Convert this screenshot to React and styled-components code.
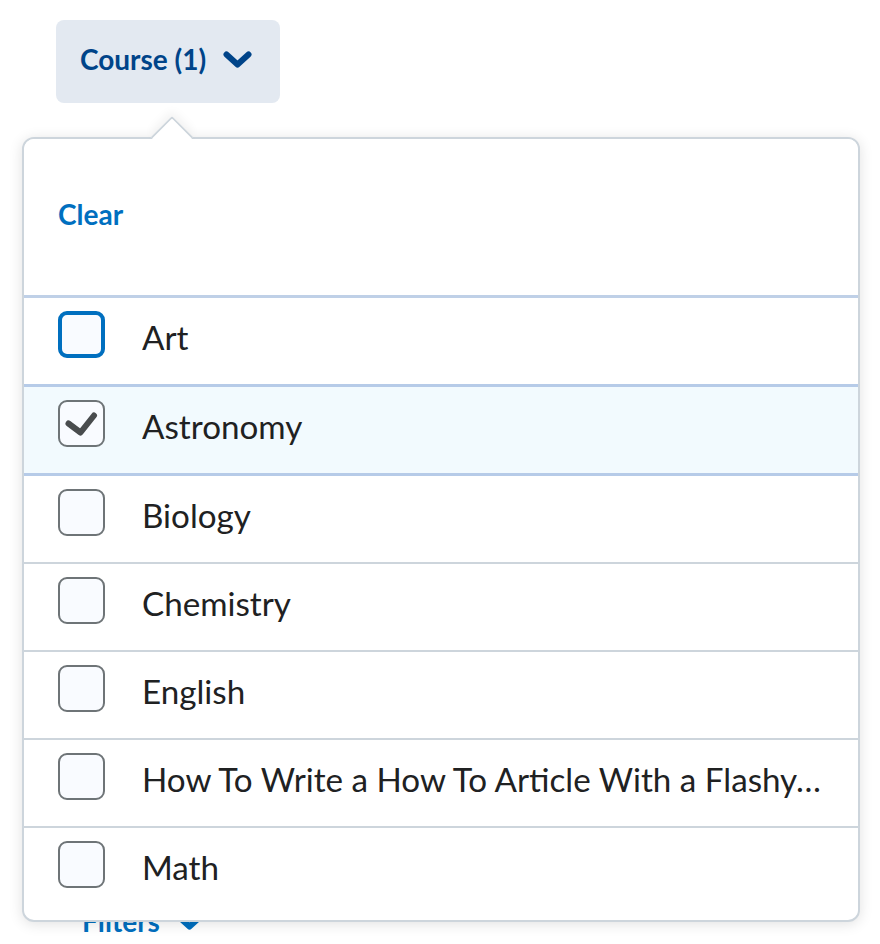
import React from "react";
import styled, { createGlobalStyle } from "styled-components";

const Global = createGlobalStyle`
  html, body { margin: 0; padding: 0; background: #ffffff; }
  body { font-family: Lato, "Noto Sans", sans-serif; }
  * { box-sizing: border-box; }
`;

const Page = styled.div`
  position: relative;
  width: 880px;
  height: 944px;
  overflow: hidden;
  padding: 20px 0 0 56px;
  display: flex;
  flex-direction: column;
  align-items: flex-start;
`;

const FilterButton = styled.button`
  display: flex;
  align-items: center;
  gap: 17px;
  height: 83px;
  width: 224px;
  padding: 0 0 5px 24px;
  border: none;
  border-radius: 8px;
  background: #e3e9f1;
  color: #004489;
  font-family: Lato, sans-serif;
  font-weight: 700;
  font-size: 28px;
  line-height: 1;
  cursor: pointer;
`;

const FiltersLink = styled.div`
  margin-top: 800px;
  margin-left: 26px;
  display: flex;
  align-items: center;
  gap: 15px;
  color: #006fbf;
  font-weight: 700;
  font-size: 28px;
  line-height: 36px;
`;

const Panel = styled.div`
  position: absolute;
  left: 22px;
  top: 137px;
  width: 838px;
  height: 785px;
  background: #ffffff;
  border: 2px solid #cdd5dc;
  border-radius: 12px;
  box-shadow: 0 2px 14px rgba(0, 0, 0, 0.12);
  display: flex;
  flex-direction: column;
`;

const Pointer = styled.div`
  position: absolute;
  left: 133px;
  top: -17px;
  width: 30px;
  height: 30px;
  background: #ffffff;
  border-top: 2px solid #cdd5dc;
  border-left: 2px solid #cdd5dc;
  transform: rotate(45deg);
  box-shadow: -4px -4px 10px rgba(0, 0, 0, 0.05);
  border-top-left-radius: 3px;
`;

const Header = styled.div`
  height: 156px;
  display: flex;
  align-items: center;
  padding: 0 0 6px 34px;
  position: relative;
  background: #ffffff;
  border-radius: 10px 10px 0 0;
`;

const ClearButton = styled.span`
  color: #006fbf;
  font-weight: 700;
  font-size: 28px;
  line-height: 1;
`;

const List = styled.div`
  display: flex;
  flex-direction: column;
`;

const Row = styled.div`
  display: flex;
  align-items: center;
  gap: 37px;
  height: ${(p) => 86 + p.$top + p.$bottom}px;
  padding: 13px 24px 26px 34px;
  border-top: ${(p) => p.$top}px solid ${(p) => p.$topColor};
  border-bottom: ${(p) => p.$bottom}px solid #b6cbe8;
  background: ${(p) => (p.$selected ? "#f2fafe" : "#ffffff")};
  &:last-child {
    height: ${(p) => 91 + p.$top}px;
    padding-bottom: 31px;
    border-radius: 0 0 10px 10px;
  }
`;

const Box = styled.span`
  flex: none;
  width: 47px;
  height: 47px;
  border-radius: 9px;
  background: #f9fbff;
  border: ${(p) => (p.$focus ? "4px solid #006fbf" : "2px solid #6e7477")};
  display: flex;
  align-items: center;
  justify-content: center;
`;

const Label = styled.span`
  flex: 1;
  min-width: 0;
  padding-top: 6px;
  color: #202122;
  font-size: 33.2px;
  line-height: 1.3;
  white-space: nowrap;
  overflow: hidden;
  text-overflow: ellipsis;
`;

const Chevron = ({ color, w = 29, h = 17 }) => (
  <svg width={w} height={h} viewBox="0 0 29 17" fill="none">
    <polyline
      points="3.5,3.5 14.5,13.5 25.5,3.5"
      stroke={color}
      strokeWidth="6"
      strokeLinecap="round"
      strokeLinejoin="round"
    />
  </svg>
);

const Check = () => (
  <svg width="43" height="43" viewBox="0 0 43 43" fill="none">
    <polyline
      points="8.5,21.5 20.5,30.5 34,13.5"
      stroke="#494c4e"
      strokeWidth="6"
      strokeLinecap="round"
      strokeLinejoin="round"
    />
  </svg>
);

const items = [
  { name: "Art", focus: true, top: 3, topColor: "#bfd0e7", bottom: 0 },
  { name: "Astronomy", checked: true, selected: true, top: 3, topColor: "#b6cbe8", bottom: 3 },
  { name: "Biology", top: 0, topColor: "#cdd5dc", bottom: 0 },
  { name: "Chemistry", top: 2, topColor: "#cdd5dc", bottom: 0 },
  { name: "English", top: 2, topColor: "#cdd5dc", bottom: 0 },
  { name: "How To Write a How To Article With a Flashy…", top: 2, topColor: "#cdd5dc", bottom: 0 },
  { name: "Math", top: 2, topColor: "#cdd5dc", bottom: 0 },
];

export default function App() {
  return (
    <>
      <Global />
      <Page>
        <FilterButton>
          <span>Course (1)</span>
          <Chevron color="#004489" />
        </FilterButton>
        <FiltersLink>
          <span>Filters</span>
          <Chevron color="#006fbf" />
        </FiltersLink>
        <Panel>
          <Pointer />
          <Header>
            <ClearButton>Clear</ClearButton>
          </Header>
          <List>
            {items.map((it) => (
              <Row
                key={it.name}
                $selected={it.selected}
                $top={it.top}
                $topColor={it.topColor}
                $bottom={it.bottom}
              >
                <Box $focus={it.focus}>{it.checked && <Check />}</Box>
                <Label>{it.name}</Label>
              </Row>
            ))}
          </List>
        </Panel>
      </Page>
    </>
  );
}
